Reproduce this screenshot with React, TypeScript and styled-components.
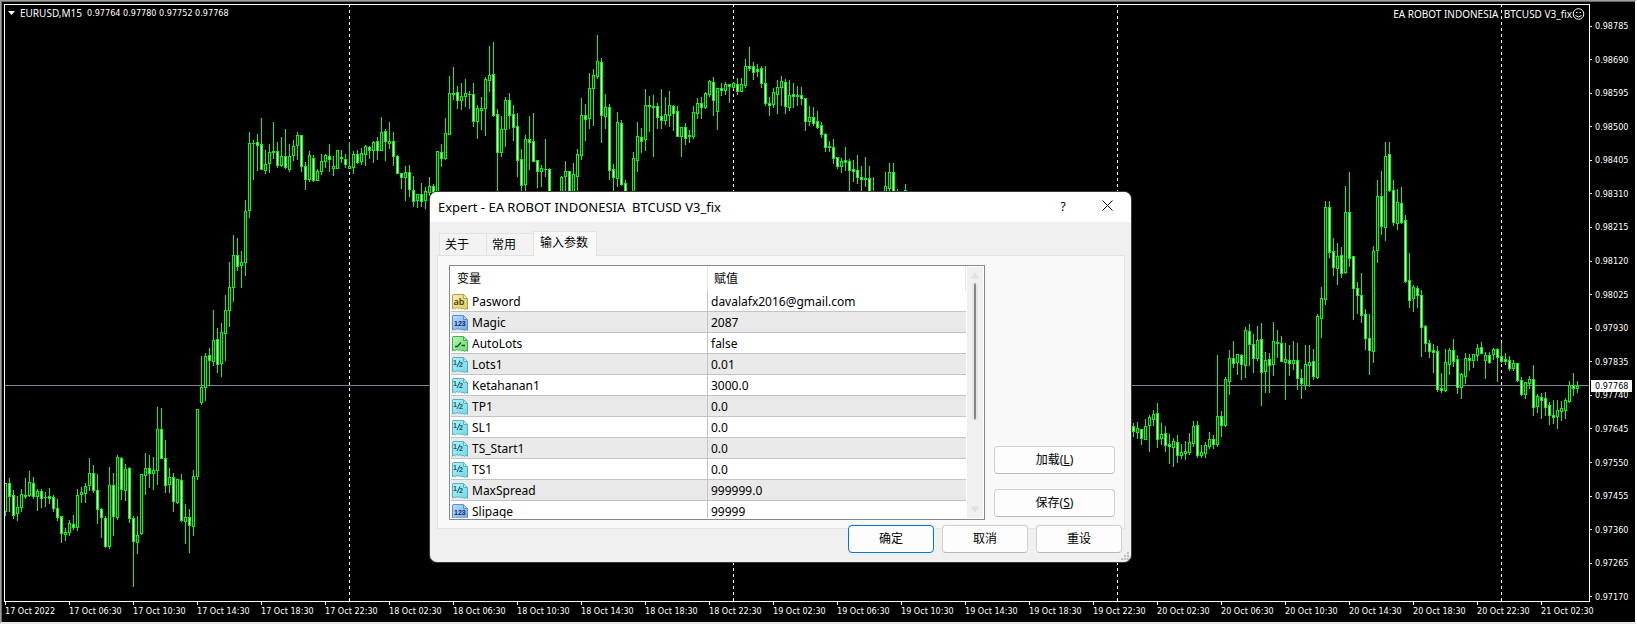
import React from 'react';
import styled, { createGlobalStyle } from 'styled-components';

const GlobalStyle = createGlobalStyle`
  *, *::before, *::after { box-sizing: border-box; }
  body { margin: 0; background: #000; }
`;

const chartFont = `'DejaVu Sans Condensed', 'DejaVu Sans', sans-serif`;
const dialogFont = `'Noto Sans', 'Noto Sans CJK SC', sans-serif`;

/* ---------- chart data: [high, body top, body bottom, low, falling] as pixel rows ---------- */

type Bar = [number, number, number, number, 0 | 1];

const bars: { start: number; list: Bar[] }[] = [
  {
    start: 0,
    list: [
      [483,483,511,515,0],[478,483,496,511,1],[490,495,515,518,1],[496,507,513,520,0],[489,494,507,511,0],
      [478,495,496,498,1],[471,482,495,496,0],[477,483,496,498,1],[489,491,496,510,0],[489,491,498,507,1],
      [492,497,497,506,1],[488,496,498,503,1],[495,497,508,511,1],[499,508,517,520,1],[516,516,533,542,1],
      [528,532,534,540,0],[520,523,532,535,0],[515,524,527,529,1],[489,495,527,530,0],[487,492,494,502,0],
      [483,486,493,502,0],[458,473,485,490,0],[465,473,490,492,1],[474,490,509,523,1],[508,509,517,537,1],
      [516,518,546,547,1],[467,485,546,548,0],[473,485,516,535,1],[455,457,517,519,0],[457,458,489,499,1],
      [464,469,490,500,0],[467,468,518,522,1],[516,518,541,586,1],[516,535,542,553,0],[474,474,533,534,0],
      [453,468,475,494,0],[455,468,473,487,1],[457,470,473,489,0],[407,429,470,484,0],[408,429,458,458,1],
      [440,458,485,492,1],[468,477,484,492,0],[473,477,501,511,1],[479,479,502,503,0],[474,480,520,521,1],
      [504,517,521,543,0],[509,517,525,552,1],[470,476,526,535,0],[409,409,476,479,0],[356,387,402,404,0],
      [353,356,387,400,0],[348,355,360,385,1],[310,340,361,365,0],[328,339,364,372,1],[323,332,363,376,0],
      [295,310,333,360,0],[262,287,310,326,0],[235,255,287,301,0],[238,255,266,270,1],[251,262,265,287,0],
      [200,211,262,275,0],[132,143,210,217,0],[140,143,143,179,1],[134,142,145,170,1],[118,144,169,169,1],
      [150,164,170,173,0],[144,152,163,172,0],[122,151,152,158,0],[142,151,165,167,1],[137,156,165,166,0],
      [129,156,167,168,1],[144,156,169,171,0],[140,146,155,160,0],[132,135,145,159,0],[135,135,166,171,1],
      [162,166,179,189,1],[151,155,179,181,0],[155,158,180,181,1],[169,171,180,180,0],[154,161,171,174,0],
      [154,155,161,167,0],[144,156,159,171,1],[156,166,168,175,0],[150,150,168,168,0],[150,157,158,162,1],
      [154,159,164,167,1],[142,166,168,168,0],[151,154,167,173,0],[150,154,162,163,1],[148,153,161,164,0],
      [145,146,154,165,0],[146,147,150,158,1],[141,142,150,162,0],[137,141,150,159,1],[117,132,150,150,0],
      [129,131,141,160,1],[122,141,143,148,0],[132,141,156,165,1],[155,156,173,173,1],[173,173,177,188,1],
      [166,172,177,200,0],[165,172,189,196,1],[176,190,201,206,1],[194,194,200,207,0],[183,194,201,206,1],
      [187,191,200,208,0],[177,186,192,195,0],[184,186,192,197,1],[151,151,195,195,0],[144,152,158,166,1],
      [118,133,158,159,0],[76,93,134,134,0],[67,93,94,99,1],[86,92,100,108,1],[83,96,100,109,0],
      [79,93,96,106,0],[91,94,94,108,0],[83,94,121,126,1],[105,108,121,138,0],[97,108,110,129,0],
      [77,79,108,135,0],[46,75,80,91,0],[42,74,115,116,1],[109,114,152,195,1],[116,129,152,156,0],
      [97,100,129,146,0],[93,100,115,128,1],[105,114,127,140,1],[113,126,160,176,1],[149,159,185,195,1],
      [135,139,184,195,0],[116,139,142,169,1],[113,141,161,161,1],[160,160,171,187,1],[165,168,171,186,0],
      [139,169,169,176,1],[168,169,200,200,1],
    ],
  },
  {
    start: 139,
    list: [
      [176,177,200,200,0],[161,171,176,195,0],[171,171,200,200,1],[163,174,200,200,0],[149,154,176,195,0],
      [98,115,155,159,0],[104,115,119,140,1],[73,88,118,128,0],[69,75,88,125,0],[35,61,76,78,0],
      [58,62,115,142,1],[94,107,116,128,0],[104,107,170,179,1],[164,169,177,195,1],[112,122,178,186,0],
      [120,123,184,185,1],[180,183,200,200,1],[191,191,191,195,0],[152,158,191,195,0],[122,136,160,171,0],
      [128,137,141,152,1],[89,105,139,150,0],[96,105,106,131,1],[95,106,107,156,1],[103,106,117,128,1],
      [89,116,120,128,1],[97,114,120,124,0],[91,105,115,126,0],[105,106,113,130,1],[106,111,136,136,1],
      [127,127,136,156,0],[123,127,138,144,1],[130,135,136,142,1],[106,112,136,138,0],[98,103,113,118,0],
      [97,103,107,118,1],[92,93,107,108,0],[80,81,94,96,0],[77,82,100,115,1],[88,88,111,129,0],
      [83,88,90,95,1],[82,84,90,94,0],[84,84,86,102,1],[82,83,87,88,0],[78,84,91,94,1],
      [78,84,91,91,0],[59,66,85,87,0],[47,66,68,70,1],[62,66,72,79,1],[64,69,71,76,1],
      [66,68,83,87,1],[66,83,103,105,1],[97,103,105,115,1],[88,92,104,107,0],[80,87,94,113,0],
      [76,81,87,105,0],[79,82,106,113,1],[80,95,107,110,0],[83,94,96,107,1],[86,95,96,105,1],
      [87,95,98,104,1],[98,98,121,130,1],[106,117,121,125,0],[107,117,123,125,1],[111,121,127,128,1],
      [122,125,134,137,1],[133,134,147,151,1],[141,146,147,151,1],[139,147,158,163,1],[157,157,166,168,1],
      [158,161,166,172,0],[147,160,162,170,1],[159,161,170,195,1],[160,169,171,181,1],[155,170,177,183,1],
      [166,177,179,195,1],[157,178,179,186,1],[166,178,200,200,1],[177,195,195,200,1],
    ],
  },
  {
    start: 220,
    list: [
      [172,186,200,200,0],[163,172,188,195,0],[163,172,200,200,1],[189,195,195,200,0],[191,195,195,200,0],
      [184,190,194,200,0],
    ],
  },
  {
    start: 282,
    list: [
      [423,426,431,436,1],[422,428,432,438,0],[429,429,438,444,1],[419,426,439,439,0],[415,417,425,451,0],
      [410,414,419,425,0],[403,413,439,447,1],[423,434,438,444,0],[426,433,445,451,1],[434,444,446,463,1],
      [438,441,447,466,0],[435,442,455,462,1],[444,452,455,458,0],[441,451,453,459,0],[433,442,452,454,0],
      [421,426,443,446,0],[421,425,455,457,1],[445,452,455,457,0],[442,445,453,457,0],[432,439,446,448,0],
      [435,439,444,448,1],[355,416,444,446,0],[411,416,425,436,1],[377,379,425,426,0],[350,358,381,394,0],
      [341,358,363,367,1],[354,354,362,374,0],[354,355,364,379,1],[327,330,365,377,0],[324,331,344,365,1],
      [334,344,358,372,1],[326,340,358,360,0],[323,339,372,405,1],[352,360,371,392,0],[353,359,365,392,1],
      [322,341,364,375,0],[330,342,343,357,1],[336,343,361,361,1],[343,359,362,399,0],[345,360,363,375,1],
      [341,360,363,369,0],[343,360,378,389,1],[369,378,383,398,1],[345,364,385,389,0],[345,362,365,386,0],
      [349,361,376,379,1],[314,316,377,378,0],[287,298,318,337,0],[201,207,299,304,0],[201,207,252,257,1],
      [238,251,267,275,1],[243,256,268,284,0],[247,255,273,277,1],[186,212,272,273,0],[172,212,258,266,1],
      [256,256,288,319,1],[282,288,295,313,1],[273,295,315,322,1],[309,314,338,349,1],[314,338,350,374,1],
      [246,251,351,362,0],[180,196,250,262,0],[171,196,226,234,1],[142,156,227,240,0],[142,154,190,191,1],
      [180,190,222,225,1],[189,202,223,229,0],[187,203,222,223,1],[215,220,281,282,1],[253,280,300,307,1],
      [285,287,298,311,0],[286,288,295,307,1],[290,295,327,356,1],[325,326,343,351,1],[340,343,351,357,1],
      [344,350,352,372,1],[346,351,389,391,1],[373,388,390,392,1],[349,362,390,391,0],[348,350,364,374,0],
      [339,350,361,366,1],[355,359,387,393,1],[373,374,387,398,0],[353,358,376,383,0],[354,358,360,370,1],
      [354,354,360,367,0],[344,348,355,360,0],[342,347,353,353,1],[352,355,360,378,0],[352,355,362,363,1],
      [348,349,354,359,0],[348,349,357,381,1],[343,356,361,362,1],[353,359,361,364,1],[356,360,368,370,1],
      [360,363,368,370,0],[363,363,380,381,1],[377,380,394,395,1],[382,382,394,398,0],[376,379,383,388,0],
      [365,379,407,415,1],[394,396,406,412,0],[393,397,400,418,1],[392,398,407,415,1],[402,405,415,424,1],
      [400,415,417,423,1],[400,410,416,428,0],[401,408,411,420,0],[398,400,410,418,0],[381,385,401,402,0],
      [373,385,388,395,1],[381,386,388,392,0],
    ],
  },
];

const box = (x: number, y: number, w: number, h: number) => `M${x} ${y}h${w}v${h}h-${w}z`;

const outline: string[] = [];
const rising: string[] = [];
const falling: string[] = [];
bars.forEach(({ start, list }) =>
  list.forEach(([high, top, bottom, low, down], i) => {
    const x = 5 + (start + i) * 4;
    outline.push(box(x, high, 1, low - high + 1), box(x - 1, top, 3, bottom - top + 1));
    if (bottom - top > 1) (down ? falling : rising).push(box(x, top + 1, 1, bottom - top - 1));
  }),
);

const prices = [
  '0.98785', '0.98690', '0.98595', '0.98500', '0.98405', '0.98310', '0.98215', '0.98120', '0.98025',
  '0.97930', '0.97835', '0.97740', '0.97645', '0.97550', '0.97455', '0.97360', '0.97265', '0.97170',
];

const hours = ['02:30', '06:30', '10:30', '14:30', '18:30', '22:30'];
const times = [
  '17 Oct 2022',
  ...hours.slice(1).map((h) => `17 Oct ${h}`),
  ...[18, 19, 20].flatMap((d) => hours.map((h) => `${d} Oct ${h}`)),
  '21 Oct 02:30',
];

/* ---------- chart ---------- */

const ChartWindow = styled.main`
  position: relative;
  display: grid;
  grid-template-columns: minmax(0, 1fr) 45px;
  grid-template-rows: minmax(0, 1fr) 20px;
  height: 100vh;
  min-height: 580px;
  padding: 3px 0 0 3px;
  overflow: hidden;
  background: #000;
  color: #fff;
  border: solid;
  border-width: 1px 2px 2px 1px;
  border-color: #a0a0a0 #fff #e8e8e8 #a0a0a0;
  box-shadow: inset 1px 1px #696969;
  font: 9px/12px ${chartFont};
`;

const Plot = styled.section`
  position: relative;
  border: 1px solid #fff;
`;

const PlotDrawing = styled.svg`
  display: block;
  width: 100%;
  height: 100%;
  overflow: hidden;
  shape-rendering: crispEdges;
`;

const Caption = styled.header`
  position: absolute;
  inset: 1px 4px auto 3px;
  display: flex;
  align-items: center;
  justify-content: space-between;
  white-space: pre;
`;

const Quote = styled.span`
  display: flex;
  align-items: center;
  gap: 5px;
`;

const CaptionName = styled.span`
  font-family: 'Noto Sans', sans-serif;
  font-size: 10px;
`;

const ExpertName = styled.span`
  display: flex;
  align-items: center;
  padding-top: 2px;
`;

const PriceAxis = styled.ol`
  position: relative;
  grid-row: 1 / 3;
  grid-column: 2;
  display: flex;
  flex-direction: column;
  justify-content: space-between;
  margin: 0;
  padding: 16px 0 19px;
  list-style: none;
`;

const PriceLabel = styled.li`
  display: flex;
  align-items: center;
  gap: 3px;
  &::before {
    content: '';
    width: 2px;
    height: 1px;
    background: #fff;
  }
`;

const CurrentPrice = styled.li`
  position: absolute;
  top: 376px;
  left: 1px;
  width: 41px;
  padding-left: 4px;
  background: #fff;
  color: #000;
`;

const TimeAxis = styled.ol`
  grid-column: 1;
  display: flex;
  margin: 0;
  padding: 0 0 0 1px;
  list-style: none;
`;

const TimeLabel = styled.li`
  flex: 0 0 64px;
  white-space: nowrap;
  &::before {
    content: '';
    display: block;
    width: 1px;
    height: 3px;
    background: #fff;
  }
`;

/* ---------- dialog ---------- */

const Dialog = styled.div`
  position: absolute;
  top: 191px;
  left: 429px;
  display: flex;
  flex-direction: column;
  width: 701px;
  height: 370px;
  overflow: hidden;
  border-radius: 7px;
  background: #f0f0f0;
  color: #000;
  box-shadow: 0 0 0 1px #3a3a3a;
  font: 12px/16px ${dialogFont};
`;

const TitleBar = styled.header`
  display: flex;
  align-items: center;
  flex: 0 0 30px;
  padding: 0 9px 0 8px;
  background: #fff;
`;

const Title = styled.h1`
  flex: 1;
  margin: 0;
  font: inherit;
  font-size: 13px;
  white-space: pre;
`;

const TitleButton = styled.button`
  width: 30px;
  height: 30px;
  margin-left: 14px;
  padding: 0;
  border: 0;
  background: none;
  color: #000;
  font: inherit;
`;

const TabList = styled.div`
  position: relative;
  display: flex;
  align-items: flex-end;
  height: 34px;
  margin: 0 9px -1px;
`;

const Tab = styled.button<{ $active?: boolean }>`
  width: ${(p) => (p.$active ? 64 : 48)}px;
  height: ${(p) => (p.$active ? 25 : 23)}px;
  margin-right: -1px;
  padding: ${(p) => (p.$active ? '0 0 2px 6px' : '0 0 0 5px')};
  border: 1px solid #e2e2e2;
  border-bottom: ${(p) => (p.$active ? '0' : '1px solid #e2e2e2')};
  background: ${(p) => (p.$active ? '#f9f9f9' : '#f3f3f3')};
  color: #000;
  font: inherit;
  text-align: left;
  z-index: ${(p) => (p.$active ? 1 : 0)};
`;

const Panel = styled.section`
  display: flex;
  flex: 1;
  align-items: flex-start;
  justify-content: space-between;
  min-height: 0;
  margin: 0 6px 0 7px;
  padding: 9px 9px 9px 11px;
  border: 1px solid #e2e2e2;
  background: #f9f9f9;
`;

const ListBox = styled.div`
  display: flex;
  width: 536px;
  height: 255px;
  padding: 1px;
  border: 1px solid #828790;
  background: #fff;
  overflow: hidden;
`;

const TableClip = styled.div`
  flex: 1;
  height: 251px;
  overflow: hidden;
`;

const ParamTable = styled.table`
  width: 100%;
  table-layout: fixed;
  border-collapse: separate;
  border-spacing: 0;
`;

const HeadCell = styled.th<{ $first?: boolean }>`
  width: ${(p) => (p.$first ? 257 : 258)}px;
  height: 24px;
  padding: 0 0 0 6px;
  border-right: 1px solid #e5e5e5;
  font-weight: 400;
  text-align: left;
`;

const ParamRow = styled.tr`
  &:nth-child(even) { background: #eaeaea; }
`;

const NameCell = styled.td`
  height: 21px;
  padding: 0 0 0 1px;
  border-right: 1px solid #c4c4c4;
  border-bottom: 1px solid #c4c4c4;
`;

const NameContent = styled.span`
  display: flex;
  align-items: center;
  gap: 4px;
  height: 20px;
  padding-top: 2px;
`;

const ValueCell = styled.td`
  padding: 2px 0 0 3px;
  border-bottom: 1px solid #c4c4c4;
`;

const ScrollBar = styled.div`
  display: flex;
  flex-direction: column;
  align-items: center;
  justify-content: space-between;
  width: 16px;
  margin-left: 1px;
  padding: 5px 0;
  background: #f0f0f0;
`;

const ScrollThumb = styled.div`
  width: 6px;
  height: 137px;
  margin: 4px 0 auto;
  border: solid #e6e6e6;
  border-width: 0 2px;
  border-radius: 3px;
  background: #858585;
`;

const SideActions = styled.div`
  display: flex;
  flex-direction: column;
  align-self: flex-end;
  gap: 15px;
  width: 121px;
  margin-bottom: 2px;
`;

const Footer = styled.footer`
  position: relative;
  display: flex;
  justify-content: flex-end;
  gap: 8px;
  margin: -4px 9px 9px;
`;

const PushButton = styled.button<{ $default?: boolean }>`
  min-width: 86px;
  height: 28px;
  padding: 0;
  border: 1px solid ${(p) => (p.$default ? '#0078d4' : '#d0d0d0')};
  border-bottom-color: ${(p) => (p.$default ? '#0078d4' : '#b9b9b9')};
  border-radius: 4px;
  background: #fdfdfd;
  color: #000;
  font: inherit;
`;

const FooterButton = styled(PushButton)`
  box-shadow: 0 0 0 1px #f0f0f0;
`;

const Grip = styled.svg`
  position: absolute;
  right: 2px;
  bottom: 2px;
`;

/* ---------- parameter icons ---------- */

type Kind = 'text' | 'int' | 'bool' | 'double';

const tones: Record<Kind, { light: string; dark: string; edge: string; ink: string }> = {
  text: { light: '#f7efb4', dark: '#dfc95a', edge: '#b39f45', ink: '#4a3f08' },
  int: { light: '#b9dcfb', dark: '#6fa9e6', edge: '#5d8fc4', ink: '#0c2c5a' },
  bool: { light: '#b4f5b4', dark: '#6fdc78', edge: '#45ad50', ink: '#0e5a1a' },
  double: { light: '#b8f1f8', dark: '#74d5e6', edge: '#56b0c0', ink: '#0f5c6c' },
};

function ParamIcon({ kind }: { kind: Kind }) {
  const t = tones[kind];
  return (
    <svg width="16" height="16" viewBox="0 0 16 16" aria-hidden="true">
      <defs>
        <linearGradient id={`tone-${kind}`} x1="0" y1="0" x2="1" y2="1">
          <stop offset="0" stopColor={t.light} />
          <stop offset="1" stopColor={t.dark} />
        </linearGradient>
      </defs>
      <path
        d="M1 .5H11.5L15.5 4.5V15.3L14 14.2L12.5 15.5L11 14.2L9.5 14.8L8 13.6L6.5 14.6L5 13.4L3.5 14.8L2 13.8L.5 15V1z"
        fill={`url(#tone-${kind})`}
        stroke={t.edge}
      />
      <path d="M11.5 1V4.5H15" fill={t.light} stroke={t.edge} />
      {kind === 'bool' && <path d="M3 10.5H5.5L9 6.5M9.5 9.5H13" fill="none" stroke={t.ink} strokeWidth="1.4" />}
      {kind === 'text' && <text x="1.5" y="11" fontSize="9" fontFamily="Noto Sans, sans-serif" fontWeight="600" fill={t.ink}>ab</text>}
      {kind === 'int' && <text x="2" y="11" fontSize="7" fontFamily="Liberation Sans, sans-serif" fontWeight="700" fill={t.ink}>123</text>}
      {kind === 'double' && (
        <>
          <text x="1" y="8" fontSize="7" fontFamily="Liberation Sans, sans-serif" fontWeight="700" fill={t.ink}>1</text>
          <path d="M5 10L8 3.5" stroke={t.ink} strokeWidth="1" />
          <text x="7" y="10" fontSize="7" fontFamily="Liberation Sans, sans-serif" fontWeight="700" fill={t.ink}>2</text>
        </>
      )}
    </svg>
  );
}

const params: [Kind, string, string][] = [
  ['text', 'Pasword', 'davalafx2016@gmail.com'],
  ['int', 'Magic', '2087'],
  ['bool', 'AutoLots', 'false'],
  ['double', 'Lots1', '0.01'],
  ['double', 'Ketahanan1', '3000.0'],
  ['double', 'TP1', '0.0'],
  ['double', 'SL1', '0.0'],
  ['double', 'TS_Start1', '0.0'],
  ['double', 'TS1', '0.0'],
  ['double', 'MaxSpread', '999999.0'],
  ['int', 'Slipage', '99999'],
];

function Chart() {
  return (
    <>
      <Plot aria-label="EURUSD M15">
        <PlotDrawing>
          <g transform="translate(-5 -5)">
            <rect x="0" y="385" width="101%" height="1" fill="#7c868c" />
            {[349, 733, 1117, 1501].map((x) => (
              <line key={x} x1={x + 0.5} x2={x + 0.5} y1="4" y2="101%" stroke="#fff" strokeDasharray="3 3" />
            ))}
            <path d={outline.join('')} fill="#00ff00" />
            <path d={rising.join('')} fill="#000" />
            <path d={falling.join('')} fill="#fff" />
          </g>
        </PlotDrawing>
        <Caption>
          <Quote>
            <svg width="7" height="4" viewBox="0 0 7 4" aria-hidden="true">
              <path d="M0 0H7L3.500 4z" fill="#fff" />
            </svg>
            <CaptionName>EURUSD,M15</CaptionName>
            <span>0.97764 0.97780 0.97752 0.97768</span>
          </Quote>
          <ExpertName>
            <CaptionName>{'EA ROBOT INDONESIA  BTCUSD V3_fix'}</CaptionName>
            <svg width="13" height="12" viewBox="0 0 13 12" fill="none" stroke="#fff" aria-hidden="true">
              <circle cx="6.500" cy="6" r="5.300" />
              <path d="M3.500 7.500Q6.500 10.500 9.500 7.500" />
              <path d="M4 4h1.500v1H4zM7.500 4H9v1H7.500z" fill="#fff" stroke="none" />
            </svg>
          </ExpertName>
        </Caption>
      </Plot>
      <PriceAxis>
        {prices.map((p) => <PriceLabel key={p}>{p}</PriceLabel>)}
        <CurrentPrice>0.97768</CurrentPrice>
      </PriceAxis>
      <TimeAxis>
        {times.map((t) => <TimeLabel key={t}>{t}</TimeLabel>)}
      </TimeAxis>
    </>
  );
}

function ExpertDialog() {
  return (
    <Dialog role="dialog" aria-labelledby="dialog-title">
      <TitleBar>
        <Title id="dialog-title">{'Expert - EA ROBOT INDONESIA  BTCUSD V3_fix'}</Title>
        <TitleButton aria-label="Help">?</TitleButton>
        <TitleButton aria-label="Close">
          <svg width="11" height="11" viewBox="0 0 11 11" aria-hidden="true">
            <path d="M.5 .5L10.500 10.500M10.500 .5L.5 10.500" stroke="#000" fill="none" />
          </svg>
        </TitleButton>
      </TitleBar>
      <TabList role="tablist">
        <Tab role="tab">关于</Tab>
        <Tab role="tab">常用</Tab>
        <Tab role="tab" aria-selected $active>输入参数</Tab>
      </TabList>
      <Panel role="tabpanel">
        <ListBox>
          <TableClip>
            <ParamTable>
              <thead>
                <tr>
                  <HeadCell $first>变量</HeadCell>
                  <HeadCell>赋值</HeadCell>
                </tr>
              </thead>
              <tbody>
                {params.map(([kind, name, value]) => (
                  <ParamRow key={name}>
                    <NameCell>
                      <NameContent><ParamIcon kind={kind} />{name}</NameContent>
                    </NameCell>
                    <ValueCell>{value}</ValueCell>
                  </ParamRow>
                ))}
              </tbody>
            </ParamTable>
          </TableClip>
          <ScrollBar>
            <svg width="8" height="7" viewBox="0 0 8 7" aria-hidden="true"><path d="M4 0L8 6.500H0z" fill="#e0e0e0" /></svg>
            <ScrollThumb />
            <svg width="8" height="7" viewBox="0 0 8 7" aria-hidden="true"><path d="M4 7L8 .5H0z" fill="#e0e0e0" /></svg>
          </ScrollBar>
        </ListBox>
        <SideActions>
          <PushButton>加载(<u>L</u>)</PushButton>
          <PushButton>保存(<u>S</u>)</PushButton>
        </SideActions>
      </Panel>
      <Footer>
        <FooterButton $default>确定</FooterButton>
        <FooterButton>取消</FooterButton>
        <FooterButton>重设</FooterButton>
      </Footer>
      <Grip width="8" height="8" viewBox="0 0 8 8" aria-hidden="true">
        <path d="M6 0h2v2H6zM3 3h2v2H3zM6 3h2v2H6zM0 6h2v2H0zM3 6h2v2H3zM6 6h2v2H6z" fill="#bcbcbc" />
      </Grip>
    </Dialog>
  );
}

export default function App() {
  return (
    <>
      <GlobalStyle />
      <ChartWindow>
        <Chart />
        <ExpertDialog />
      </ChartWindow>
    </>
  );
}
